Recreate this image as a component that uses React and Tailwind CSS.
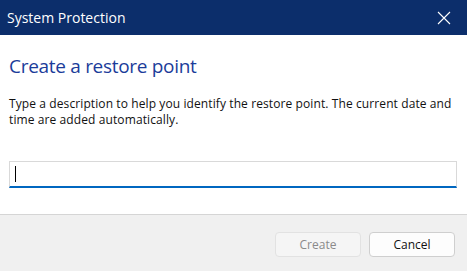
export default function App() {
  return (
    <div className="w-[467px] h-[271px] flex flex-col bg-white overflow-hidden" style={{ fontFamily: '"Open Sans", "Noto Sans", sans-serif' }}>
      <div className="h-[35px] bg-[#0c2e6b] flex items-center justify-between pl-[7px] pr-[16px] text-white">
        <span className="text-[14px] leading-none">System Protection</span>
        <svg width="14" height="14" viewBox="0 0 14 14" className="text-white">
          <path d="M1 1 L13 13 M13 1 L1 13" stroke="currentColor" strokeWidth="1.1" />
        </svg>
      </div>
      <div className="flex-1 flex flex-col pl-[9px] pr-[10px]">
        <h1 className="mt-[18px] text-[19px] leading-[26px] tracking-[-0.3px] text-[#1b3c9a]">Create a restore point</h1>
        <p className="mt-[17px] text-[12px] leading-[16px] text-[#111] tracking-[0.1px]">
          Type a description to help you identify the restore point. The current date and time are added automatically.
        </p>
        <div className="mt-[33px] w-[448px] h-[27px] border border-[#d9d9d9] border-b-2 border-b-[#0067c0] flex items-center pl-[5px]">
          <div className="w-px h-[16px] bg-black" />
        </div>
      </div>
      <div className="h-[57px] border-t border-[#d5d5d5] bg-[#f0f0f0] flex items-start justify-end gap-[8px] pt-[17px] pr-[12px]">
        <button className="w-[86px] h-[25px] rounded-[4px] border border-[#e2e2e2] bg-[#f5f5f5] text-[12px] text-[#8a8a8a]">Create</button>
        <button className="w-[86px] h-[25px] rounded-[4px] border border-[#cfcfcf] bg-[#fdfdfd] text-[12px] text-[#111]">Cancel</button>
      </div>
    </div>
  );
}
